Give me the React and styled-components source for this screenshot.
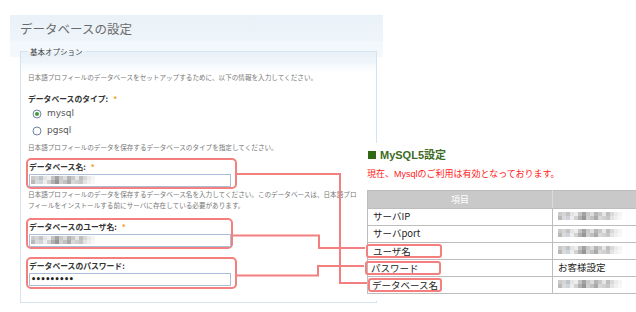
import styled, { createGlobalStyle } from "styled-components";

const GlobalStyle = createGlobalStyle`
  html, body {
    margin: 0;
    padding: 0;
    background: #fff;
  }
  body {
    font-family: "Noto Sans CJK JP", sans-serif;
  }
`;

const JP = `"Noto Sans CJK JP", sans-serif`;
const MARK = "#f37f7f";

const Page = styled.div`
  position: relative;
  width: 636px;
  height: 312px;
  overflow: hidden;
  padding: 15px 0 0 10px;
  box-sizing: border-box;
`;

const Panel = styled.section`
  width: 373px;
  background: linear-gradient(
    to bottom,
    #eaf2f9 0,
    #edf4fa 25px,
    #f3f8fc 27px,
    #f3f8fc 42px,
    #fff 42px
  );
`;

const PanelTitle = styled.h1`
  margin: 0;
  height: 27px;
  padding-left: 10px;
  font: 400 12.5px/27px ${JP};
  color: #6b6b6b;
`;

const Fieldset = styled.fieldset`
  margin: 4px 0 0 10px;
  width: 357px;
  box-sizing: border-box;
  padding: 15px 0 13px 5px;
  border: 1px solid #d5e3ef;
  background: linear-gradient(
    to bottom,
    #e9f1f8 0,
    #eef5fa 11px,
    #f5f9fc 12px,
    #fff 22px
  );
`;

const Legend = styled.legend`
  margin-left: 2px;
  padding: 0 2px;
  font: 400 7.5px/11px ${JP};
  color: #444;
`;

const Note = styled.p`
  margin: ${(p) => p.$mt || 0}px 0 0;
  padding-left: 2px;
  font: 400 6.6px/${(p) => p.$lh || 10}px ${JP};
  color: #777;
  white-space: nowrap;
`;

const Label = styled.div`
  font: 700 7.8px/${(p) => p.$lh || 13}px ${JP};
  color: #333;
  white-space: nowrap;
  margin-top: ${(p) => p.$mt || 0}px;
  padding-left: ${(p) => p.$pl || 0}px;
`;

const Required = styled.span`
  color: #f0a020;
  margin-left: 5px;
`;

const RadioRow = styled.label`
  display: flex;
  align-items: center;
  gap: 5px;
  height: 17px;
  padding-left: 6px;
  font: 400 9px/17px "DejaVu Sans", sans-serif;
  color: #555;
`;

const Callout = styled.div`
  width: ${(p) => p.$w}px;
  margin-top: ${(p) => p.$mt || 0}px;
  box-sizing: border-box;
  border: 2px solid ${MARK};
  border-radius: 5px;
  padding: 0 0 ${(p) => p.$pb || 0}px 1px;
`;

const TextInput = styled.div`
  width: 202px;
  height: 13px;
  margin-top: 1px;
  box-sizing: border-box;
  border: 1px solid #a9bfd8;
  background: #fff;
  display: flex;
  align-items: center;
  padding-left: 1px;
  overflow: hidden;
`;

const Dots = styled.span`
  font: 700 8px/11px "DejaVu Sans", sans-serif;
  letter-spacing: -0.4px;
  color: #222;
`;

const Overlay = styled.aside`
  position: absolute;
  left: 360px;
  top: 143px;
  width: 276px;
  height: 158px;
  box-sizing: border-box;
  padding: 5px 0 0 7px;
  background: #fff;
  overflow: hidden;
`;

const Heading = styled.h2`
  margin: 0;
  display: flex;
  align-items: center;
  gap: 4px;
  padding-left: 1px;
  font: 700 11px/14px "Liberation Sans", ${JP};
  color: #3d6b1f;
`;

const Square = styled.span`
  width: 8px;
  height: 8px;
  background: #2f6a12;
`;

const Status = styled.p`
  margin: 6px 0 0;
  font: 400 9px/12px "Liberation Sans", ${JP};
  color: #ff2020;
  white-space: nowrap;
`;

const Table = styled.table`
  margin-top: 10px;
  width: 300px;
  table-layout: fixed;
  border-collapse: collapse;
  font: 400 9.5px/1 ${JP};
  color: #222;
`;

const Th = styled.th`
  height: 17px;
  padding: 0;
  background: #c9c9c9;
  color: #fff;
  font-weight: 400;
  font-size: 9px;
  text-align: center;
  border: 1px solid #bdbdbd;
  border-right-color: #dadada;
`;

const Td = styled.td`
  height: 16px;
  padding: 0 0 0 5px;
  border: 1px solid #bdbdbd;
  white-space: nowrap;
`;

const Mark = styled.span`
  display: inline-block;
  width: ${(p) => p.$w}px;
  height: 14px;
  margin-left: ${(p) => p.$shift}px;
  box-sizing: border-box;
  padding-left: ${(p) => p.$pad}px;
  border: 2px solid ${MARK};
  border-radius: 3px;
  line-height: 10px;
`;

const Connectors = styled.svg`
  position: absolute;
  left: 0;
  top: 0;
  pointer-events: none;
`;

const SHADES = [
  ["#cbcbcb", "#d5d5d5", "#c0c4c9", "#e3e3e3", "#ededed", "#c4c4c4", "#a3a3a3", "#c9c9c9",
   "#dcdcdc", "#b5b5b5", "#c8c8c8", "#e6e6e6", "#bebebe", "#d9d9d9", "#ebebeb", "#f4f4f4"],
  ["#b9b9b9", "#dbdbdb", "#cfd4da", "#ededed", "#d1d1d1", "#b1b1b1", "#969696", "#cfcfcf",
   "#c1c1c1", "#a9a9a9", "#d8d8d8", "#d0d0d0", "#c6c6c6", "#e4e4e4", "#f0f0f0", "#f8f8f8"],
];

function Mosaic() {
  return (
    <svg width="64" height="8" viewBox="0 0 64 8" shapeRendering="crispEdges">
      {SHADES.map((row, r) =>
        row.map((c, i) => (
          <rect key={`${r}-${i}`} x={i * 4} y={r * 4} width="4" height="4" fill={c} />
        ))
      )}
    </svg>
  );
}

function Radio({ checked }) {
  return (
    <svg width="10" height="10" viewBox="0 0 10 10">
      <circle cx="5" cy="5" r="4" fill="#fbfcfd" stroke="#71869e" strokeWidth="1" />
      {checked && <circle cx="5" cy="5" r="2" fill="#3f9e3a" />}
    </svg>
  );
}

const rows = [
  { item: "サーバIP" },
  { item: "サーバport" },
  { item: "ユーザ名", mark: { shift: -7, w: 76, pad: 5 } },
  { item: "パスワード", mark: { shift: -8, w: 76, pad: 4 }, value: "お客様設定" },
  { item: "データベース名", mark: { shift: -5, w: 74, pad: 2 } },
];

const lines = [
  "237,174 340,174 340,283 367,283",
  "233,235.5 319,235.5 319,248 365,248",
  "237,275.5 318,275.5 318,266 364,266",
];

export default function App() {
  return (
    <Page>
      <GlobalStyle />
      <Panel>
        <PanelTitle>データベースの設定</PanelTitle>
        <Fieldset>
          <Legend>基本オプション</Legend>
          <Note>日本語プロフィールのデータベースをセットアップするために、以下の情報を入力してください。</Note>
          <Label $mt={11} $lh={12} $pl={2}>
            データベースのタイプ:<Required>*</Required>
          </Label>
          <RadioRow>
            <Radio checked />
            mysql
          </RadioRow>
          <RadioRow>
            <Radio />
            pgsql
          </RadioRow>
          <Note $mt={2.5}>日本語プロフィールのデータを保存するデータベースのタイプを指定してください。</Note>

          <Callout $w={211} $mt={6}>
            <Label>
              データベース名:<Required>*</Required>
            </Label>
            <TextInput>
              <Mosaic />
            </TextInput>
          </Callout>
          <Note $lh={11.5}>
            日本語プロフィールのデータを保存するデータベース名を入力してください。このデータベースは、日本語プロ
            <br />
            フィールをインストールする前にサーバに存在している必要があります。
          </Note>

          <Callout $w={207} $mt={6}>
            <Label>
              データベースのユーザ名:<Required>*</Required>
            </Label>
            <TextInput>
              <Mosaic />
            </TextInput>
          </Callout>

          <Callout $w={211} $mt={8} $pb={1}>
            <Label>データベースのパスワード:</Label>
            <TextInput>
              <Dots>•••••••••</Dots>
            </TextInput>
          </Callout>
        </Fieldset>
      </Panel>

      <Overlay>
        <Heading>
          <Square />
          MySQL5設定
        </Heading>
        <Status>現在、Mysqlのご利用は有効となっております。</Status>
        <Table>
          <colgroup>
            <col style={{ width: 185 }} />
            <col />
          </colgroup>
          <thead>
            <tr>
              <Th>項目</Th>
              <Th />
            </tr>
          </thead>
          <tbody>
            {rows.map((r) => (
              <tr key={r.item}>
                <Td>
                  {r.mark ? (
                    <Mark $shift={r.mark.shift} $w={r.mark.w} $pad={r.mark.pad}>
                      {r.item}
                    </Mark>
                  ) : (
                    r.item
                  )}
                </Td>
                <Td>{r.value || <Mosaic />}</Td>
              </tr>
            ))}
          </tbody>
        </Table>
      </Overlay>

      <Connectors width="636" height="312" viewBox="0 0 636 312">
        {lines.map((pts) => (
          <polyline key={pts} points={pts} fill="none" stroke={MARK} strokeWidth="2" />
        ))}
      </Connectors>
    </Page>
  );
}
